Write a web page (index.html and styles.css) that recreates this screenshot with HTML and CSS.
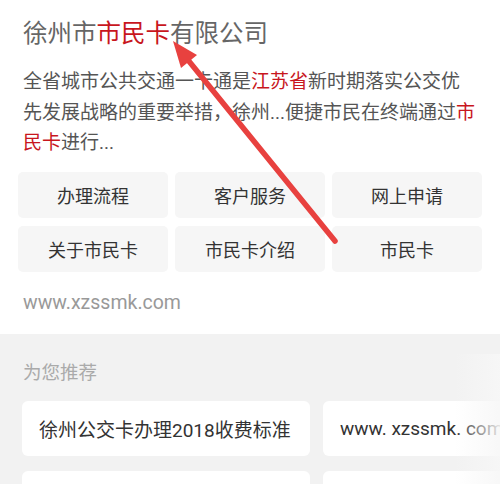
FILE: index.html
```html
<!DOCTYPE html>
<html lang="zh-CN">
<head>
  <meta charset="UTF-8">
  <meta name="viewport" content="width=device-width, initial-scale=1.0">
  <title>徐州市市民卡有限公司</title>
  <link rel="stylesheet" href="styles.css">
</head>
<body>

<div class="result">
  <h3 class="title">徐州市<em>市民卡</em>有限公司</h3>
  <p class="desc">全省城市公共交通一卡通是<em>江苏省</em>新时期落实公交优先发展战略的重要举措，徐州...便捷市民在终端通过<em>市民卡</em>进行...</p>
  <div class="links">
    <a href="#">办理流程</a>
    <a href="#">客户服务</a>
    <a href="#">网上申请</a>
    <a href="#">关于市民卡</a>
    <a href="#">市民卡介绍</a>
    <a href="#">市民卡</a>
  </div>
  <div class="site">www.xzssmk.com</div>
</div>

<div class="recommend">
  <div class="rec-label">为您推荐</div>
  <div class="rec-row">
    <a href="#" class="rec-card">徐州公交卡办理2018收费标准</a>
    <a href="#" class="rec-card">www. xzssmk. com</a>
  </div>
  <div class="rec-row">
    <a href="#" class="rec-card"></a>
    <a href="#" class="rec-card"></a>
  </div>
  <div class="fade"></div>
</div>

<!-- red arrow drawn over the screenshot -->
<svg class="arrow" width="500" height="484" viewBox="0 0 500 484">
  <line x1="335" y1="241" x2="188" y2="60" stroke="#e8413f" stroke-width="5.5" stroke-linecap="round"/>
  <polygon points="173,41 197,55 181,68" fill="#e8413f"/>
</svg>

</body>
</html>
```

FILE: styles.css
```css
body {
  margin: 0;
  font-family: Roboto, "Noto Sans CJK SC", sans-serif;
  background: #ffffff;
  position: relative;
  width: 500px;
  height: 484px;
  overflow: hidden;
}
a {
  text-decoration: none;
  color: #333;
}
em {
  font-style: normal;
  color: #c8161d;
}
.result {
  padding: 18px 18px 19px;
}
.title {
  margin: 0 5px;
  font-size: 24.5px;
  line-height: 32px;
  font-weight: normal;
  color: #666;
}
.desc {
  margin: 17px 4px 13px 5px;
  font-size: 19px;
  line-height: 30.5px;
  color: #555;
}
.links {
  display: grid;
  grid-template-columns: repeat(3, 1fr);
  gap: 8px 7px;
}
.links a {
  height: 46px;
  display: flex;
  align-items: center;
  justify-content: center;
  background: #f6f6f6;
  border-radius: 5px;
  font-size: 18px;
  color: #333;
}
.site {
  margin: 19px 5px 0;
  font-size: 19.5px;
  line-height: 24px;
  color: #999;
}
.recommend {
  position: relative;
  background: #f2f2f2;
  padding: 27px 0 20px 22px;
  height: 124px;
}
.rec-label {
  margin-left: 1px;
  font-size: 18.5px;
  line-height: 24px;
  color: #aaa;
  margin-bottom: 16px;
}
.rec-row {
  display: flex;
  gap: 13px;
  margin-bottom: 15px;
}
.rec-card {
  flex: none;
  width: 288px;
  height: 55px;
  box-sizing: border-box;
  padding: 0 17px;
  display: flex;
  align-items: center;
  background: #fff;
  border-radius: 6px;
  font-size: 19px;
  color: #333;
  white-space: nowrap;
  overflow: hidden;
}
.fade {
  position: absolute;
  top: 20px;
  right: 0;
  bottom: 0;
  width: 45px;
  background: linear-gradient(to right, rgba(247, 247, 247, 0), rgba(247, 247, 247, 0.9));
}
.arrow {
  position: absolute;
  top: 0;
  left: 0;
  pointer-events: none;
}
```
